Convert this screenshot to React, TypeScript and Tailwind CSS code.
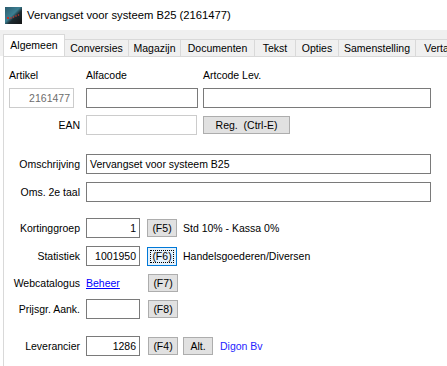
import React from 'react';

const tabs = [
  { label: 'Algemeen', w: 62, active: true },
  { label: 'Conversies', w: 64 },
  { label: 'Magazijn', w: 52 },
  { label: 'Documenten', w: 74 },
  { label: 'Tekst', w: 41 },
  { label: 'Opties', w: 43 },
  { label: 'Samenstelling', w: 77 },
  { label: 'Vertalingen', w: 70 },
];

function AppIcon() {
  return (
    <svg width="17" height="17" viewBox="0 0 17 17">
      <defs>
        <linearGradient id="ic" x1="0" y1="0" x2="1" y2="1">
          <stop offset="0" stopColor="#2b5b6e" />
          <stop offset="0.45" stopColor="#3c7f92" />
          <stop offset="0.6" stopColor="#1c2a30" />
          <stop offset="1" stopColor="#141414" />
        </linearGradient>
      </defs>
      <rect width="17" height="17" fill="url(#ic)" />
      <rect x="2" y="10" width="2" height="2" fill="#c0302a" />
      <circle cx="6" cy="11" r="0.8" fill="#d23a30" />
      <circle cx="8.5" cy="10" r="0.8" fill="#d23a30" />
      <circle cx="11" cy="9" r="0.8" fill="#d23a30" />
      <circle cx="13.5" cy="8" r="0.8" fill="#d23a30" />
    </svg>
  );
}

function Btn({ children, w = 30, focused = false }: { children: React.ReactNode; w?: number; focused?: boolean }) {
  if (focused) {
    return (
      <div
        className="h-[19px] border border-[#0078d7] bg-[#e5f1fb] p-[2px] flex"
        style={{ width: w }}
      >
        <div className="flex-1 border border-dotted border-black flex items-center justify-center">{children}</div>
      </div>
    );
  }
  return (
    <div
      className="h-[18px] border border-[#adadad] bg-[#e1e1e1] flex items-center justify-center whitespace-pre"
      style={{ width: w }}
    >
      {children}
    </div>
  );
}

function Field({ w, value = '', right = false, light = false, gray = false }: { w: number; value?: string; right?: boolean; light?: boolean; gray?: boolean }) {
  return (
    <div
      className={`h-[20px] border bg-white flex items-center px-[3px] ${light ? 'border-[#cccccc]' : 'border-[#7a7a7a]'} ${right ? 'justify-end' : ''} ${gray ? 'text-[#6d6d6d]' : 'text-black'}`}
      style={{ width: w }}
    >
      {value}
    </div>
  );
}

function Row({ label, children, mt }: { label: string; children: React.ReactNode; mt: string }) {
  return (
    <div className={`flex items-center h-[20px] ${mt}`}>
      <span className="w-[76px] text-right shrink-0">{label}</span>
      <div className="ml-[6px] flex items-center">{children}</div>
    </div>
  );
}

export default function App() {
  return (
    <div className="w-[447px] h-[366px] bg-white overflow-hidden flex flex-col font-['Liberation_Sans',Arial,sans-serif] text-[10.5px] leading-[13px] text-black">
      {/* Title bar */}
      <div className="h-[30px] flex items-center pl-[5px] gap-[5px] shrink-0">
        <AppIcon />
        <span className="text-[11.25px]">Vervangset voor systeem B25 (2161477)</span>
      </div>

      {/* Tabs */}
      <div className="h-[26px] bg-[#f0f0f0] flex items-end pl-[3px] shrink-0 overflow-hidden">
        {tabs.map((t) =>
          t.active ? (
            <div
              key={t.label}
              className="h-[23px] -mb-px bg-white border border-b-0 border-[#d9d9d9] flex items-center justify-center pb-[2px] shrink-0 relative z-10"
              style={{ width: t.w }}
            >
              {t.label}
            </div>
          ) : (
            <div
              key={t.label}
              className="h-[17px] border-t border-r border-[#d9d9d9] bg-[#f0f0f0] flex items-center justify-center shrink-0"
              style={{ width: t.w }}
            >
              {t.label}
            </div>
          )
        )}
      </div>

      {/* Pane */}
      <div className="flex-1 ml-[3px] border-t border-l border-[#d9d9d9] bg-white">
        <div className="flex mt-[12px] pl-[5px]">
          <span className="w-[77px]">Artikel</span>
          <span className="w-[117px]">Alfacode</span>
          <span>Artcode Lev.</span>
        </div>
        <div className="flex items-center mt-[6px] pl-[5px]">
          <Field w={65} value="2161477" right light gray />
          <div className="ml-[12px]">
            <Field w={112} />
          </div>
          <div className="ml-[5px]">
            <Field w={228} />
          </div>
        </div>

        <Row label="EAN" mt="mt-[7px]">
          <Field w={111} light />
          <div className="ml-[6px]">
            <Btn w={87}>{'Reg.  (Ctrl-E)'}</Btn>
          </div>
        </Row>

        <Row label="Omschrijving" mt="mt-[19px]">
          <Field w={345} value="Vervangset voor systeem B25" />
        </Row>
        <Row label="Oms. 2e taal" mt="mt-[8px]">
          <Field w={345} />
        </Row>

        <Row label="Kortinggroep" mt="mt-[16px]">
          <Field w={54} value="1" right />
          <div className="ml-[7px]">
            <Btn>(F5)</Btn>
          </div>
          <span className="ml-[6px]">Std 10% - Kassa 0%</span>
        </Row>
        <Row label="Statistiek" mt="mt-[8px]">
          <Field w={54} value="1001950" right />
          <div className="ml-[7px]">
            <Btn focused>(F6)</Btn>
          </div>
          <span className="ml-[6px]">Handelsgoederen/Diversen</span>
        </Row>
        <Row label="Webcatalogus" mt="mt-[7px]">
          <span className="w-[54px] text-[#0000ff] underline">Beheer</span>
          <div className="ml-[8px]">
            <Btn>(F7)</Btn>
          </div>
        </Row>
        <Row label="Prijsgr. Aank." mt="mt-[6px]">
          <Field w={54} />
          <div className="ml-[8px]">
            <Btn>(F8)</Btn>
          </div>
        </Row>
        <Row label="Leverancier" mt="mt-[17px]">
          <Field w={54} value="1286" right />
          <div className="ml-[8px]">
            <Btn>(F4)</Btn>
          </div>
          <div className="ml-[5px]">
            <Btn>Alt.</Btn>
          </div>
          <span className="ml-[7px] text-[#2424ff]">Digon Bv</span>
        </Row>
      </div>
    </div>
  );
}
